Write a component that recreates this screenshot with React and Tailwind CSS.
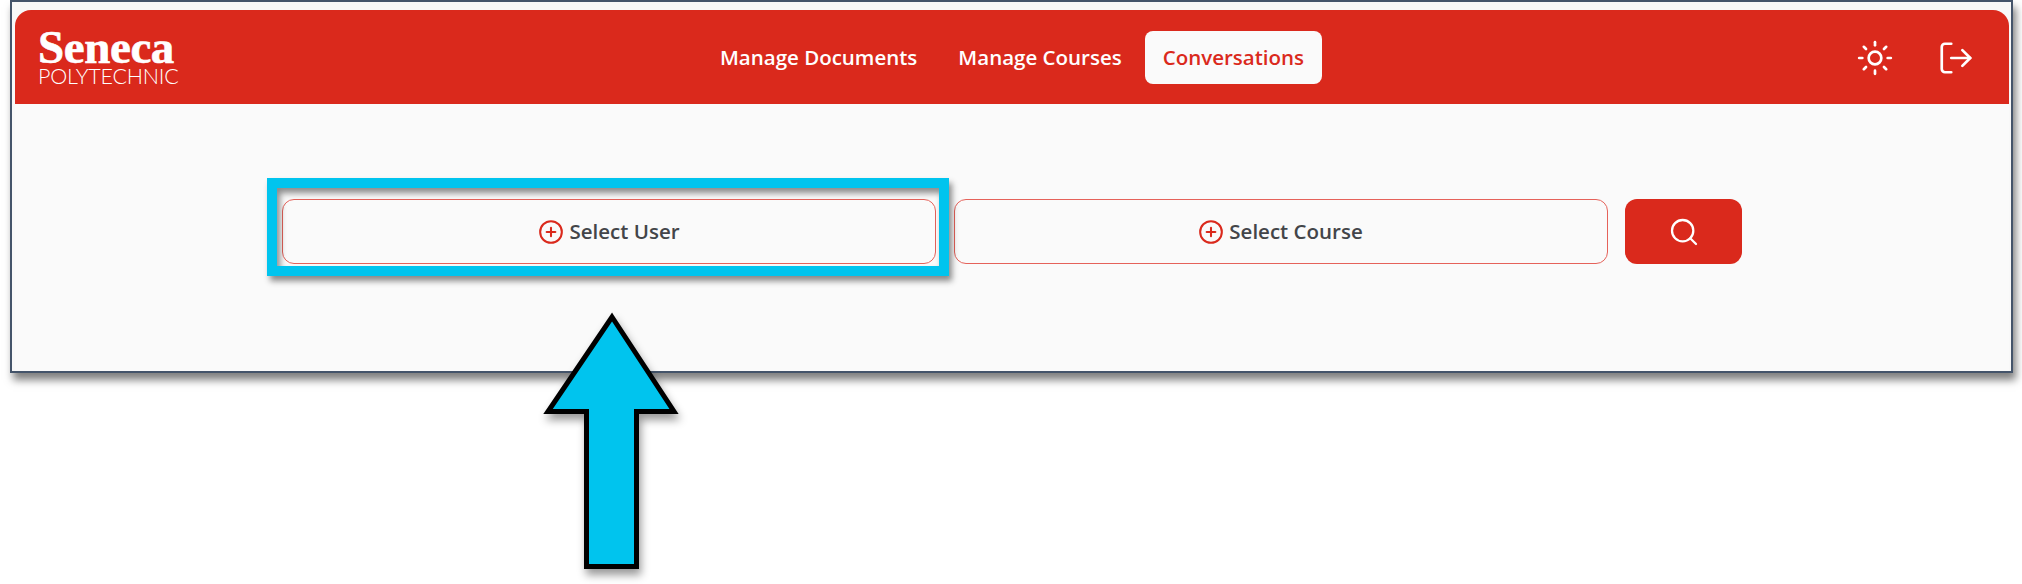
import { CirclePlus, LogOut, Search, Sun } from "lucide-react";

const openSans = { fontFamily: '"Open Sans", sans-serif' };

function NavLink({ label, active }) {
  return (
    <a
      className={
        active
          ? "flex h-[53px] items-center rounded-lg bg-[#fafafa] px-[18px] text-[#da291c]"
          : "flex h-[53px] items-center rounded-lg px-[18px] text-white"
      }
    >
      {label}
    </a>
  );
}

function SelectButton({ label }) {
  return (
    <button className="flex h-[65px] flex-1 items-center justify-center gap-[5px] rounded-xl border border-[#e5625a] text-[20.5px] font-semibold text-[#434549]">
      <CirclePlus size={26} strokeWidth={1.9} className="text-[#da291c]" />
      {label}
    </button>
  );
}

export default function App() {
  return (
    <div className="relative h-[584px] w-[2022px] overflow-hidden bg-white" style={openSans}>
      <div className="ml-[10px] flex h-[373px] w-[2003px] flex-col border-2 border-[#44546a] bg-[#f8f8f8] pt-2 pr-[2px] pl-[3px] shadow-[3px_7px_8px_rgba(0,0,0,0.5)]">
        <header className="relative flex h-[94px] shrink-0 items-center justify-center rounded-t-2xl bg-[#da291c]">
          <div className="absolute top-[20px] left-[23px] flex flex-col text-white">
            <span className="font-['Liberation_Serif',serif] text-[47px] leading-[34px] font-bold tracking-[-0.4px] [-webkit-text-stroke:0.6px_white]">Seneca</span>
            <span className="font-['Lato',sans-serif] mt-[2px] text-[21.5px] leading-[20px] font-light tracking-[-0.2px]">POLYTECHNIC</span>
          </div>
          <nav className="flex items-center gap-[5px] text-[20.5px] font-semibold">
            <NavLink label="Manage Documents" />
            <NavLink label="Manage Courses" />
            <NavLink label="Conversations" active />
          </nav>
          <div className="absolute top-[29px] right-[34px] flex items-center gap-[43px] text-white">
            <Sun size={38} strokeWidth={1.7} />
            <LogOut size={38} strokeWidth={1.7} />
          </div>
        </header>
        <main className="flex flex-1 justify-center bg-[#fafafa] pt-[95px]">
          <div className="flex h-[65px] w-[1460px] gap-[17.5px]">
            <SelectButton label="Select User" />
            <SelectButton label="Select Course" />
            <button className="flex h-[65px] w-[117px] items-center justify-center rounded-xl bg-[#da291c] text-white">
              <Search size={32} strokeWidth={1.7} />
            </button>
          </div>
        </main>
      </div>

      {/* annotation laid over the screenshot */}
      <div className="absolute top-[178px] left-[267px] h-[98px] w-[682px] border-[10px] border-[#00c4ee] shadow-[3px_5px_6px_rgba(0,0,0,0.45),inset_3px_5px_6px_rgba(0,0,0,0.45)]" />
      <svg className="absolute top-[300px] left-[530px] drop-shadow-[2px_6px_4px_rgba(0,0,0,0.4)]" width="165" height="280" viewBox="530 300 165 280">
        <path
          d="M612 317 L674 411.5 L636.5 411.5 L636.5 566.5 L586.5 566.5 L586.5 411.5 L548 411.5 Z"
          fill="#00c4ee"
          stroke="#000"
          strokeWidth="5"
          strokeLinejoin="miter"
        />
      </svg>
    </div>
  );
}
